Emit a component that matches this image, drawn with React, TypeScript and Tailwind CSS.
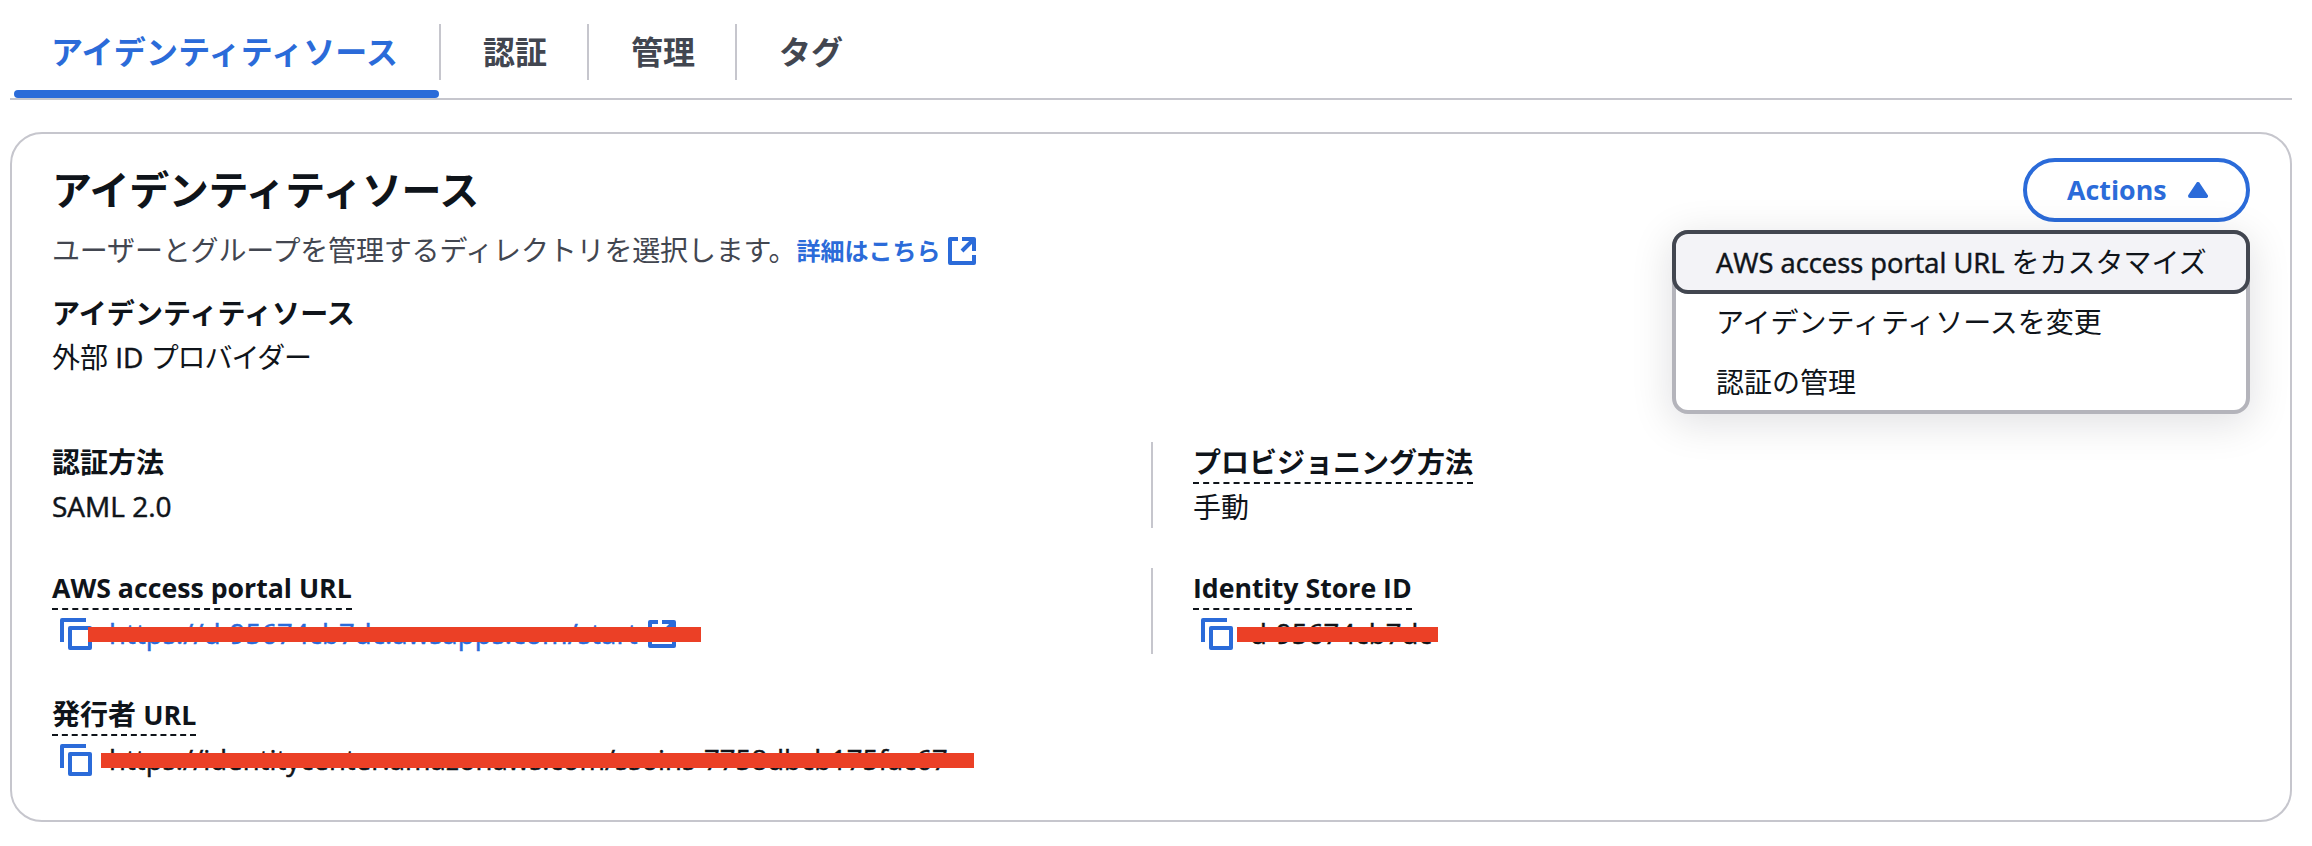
import React from "react";

const JP = "font-['Open_Sans','Noto_Sans_CJK_JP',sans-serif]";

function CopyIcon() {
  return (
    <svg width="32" height="32" viewBox="0 0 32 32" fill="none" stroke="#2b6bd9" strokeWidth="4" strokeLinejoin="round" className="block shrink-0">
      <path d="M26 2H2v22" />
      <path d="M10 10h20v20H10z" />
    </svg>
  );
}

function ExternalIcon() {
  return (
    <svg width="28" height="28" viewBox="0 0 28 28" fill="none" stroke="#2b6bd9" strokeWidth="4" strokeLinejoin="round" className="block shrink-0">
      <path d="M10 2H2v24h24v-8" />
      <path d="M14 2h12v12M26 2L14 14" />
    </svg>
  );
}

function Tab({ label, className }: { label: string; className: string }) {
  return (
    <div className="flex h-[98px] items-start pt-6">
      <div className={`flex h-14 items-center border-[#c6c6cd] text-[32px] font-bold whitespace-nowrap ${className}`}>{label}</div>
    </div>
  );
}

function Label({ children, dashed = false, className = "" }: { children: React.ReactNode; dashed?: boolean; className?: string }) {
  return (
    <div className="flex h-[42px]">
      <div className={`font-bold whitespace-nowrap leading-[40px] ${dashed ? "border-b-2 border-dashed border-[#0f141a]" : ""} ${className}`}>{children}</div>
    </div>
  );
}

function Redacted({ children, className, bar }: { children: React.ReactNode; className: string; bar: string }) {
  return (
    <div className="relative mt-2 flex h-8 items-center pl-2">
      <CopyIcon />
      <div className={`ml-[17px] flex items-center text-[27.5px] whitespace-nowrap leading-8 [-webkit-text-stroke:0.5px] ${className}`}>{children}</div>
      <div className={`absolute top-[9px] h-[15px] bg-[#eb4026] ${bar}`} />
    </div>
  );
}

export default function App() {
  return (
    <div lang="ja" className={`h-[846px] w-[2312px] bg-white pl-[10px] text-[28px] text-[#0f141a] ${JP}`}>
      <div className="flex h-[100px] w-[2282px] border-b-2 border-[#c6c6cd] pl-1">
        <div className="flex h-[98px] w-[427px] flex-col">
          <Tab label="アイデンティティソース" className="w-[427px] border-r-2 pl-[37px] tracking-[0.2px] text-[#2b6bd9]" />
          <div className="-mt-2 h-2 w-[425px] shrink-0 rounded bg-[#2b6bd9]" />
        </div>
        <Tab label="認証" className="w-[148px] border-r-2 pl-[42px] text-[#424650]" />
        <Tab label="管理" className="w-[148px] border-r-2 pl-[42px] text-[#424650]" />
        <Tab label="タグ" className="w-[148px] pl-[42px] text-[#424650]" />
      </div>

      <main className="mt-8 h-[690px] w-[2282px] rounded-[32px] border-2 border-[#c6c6cd] pr-10 pl-10">
        <header className="flex justify-between pt-6">
          <div>
            <h2 className="h-16 text-[40px] leading-[64px] font-bold tracking-[-0.4px] whitespace-nowrap">アイデンティティソース</h2>
            <div className="mt-[9px] flex h-[40px] items-center whitespace-nowrap text-[#424650]">
              <span className="pb-0.5 tracking-[-0.17px]">ユーザーとグループを管理するディレクトリを選択します。</span>
              <a className="flex items-center gap-[8px] text-[24px] font-bold text-[#2b6bd9]">
                詳細はこちら
                <ExternalIcon />
              </a>
            </div>
          </div>
          <div className="relative h-16">
            <button className="flex h-16 w-[227px] items-center rounded-full border-4 border-[#2b6bd9] pl-10 font-bold text-[#2b6bd9]">
              <span className="w-[98px] text-left text-[26.8px] whitespace-nowrap">Actions</span>
              <svg width="20" height="16" viewBox="0 0 20 16" className="ml-[23px] block">
                <path d="M10 2L18 14H2z" fill="#2b6bd9" stroke="#2b6bd9" strokeWidth="4" strokeLinejoin="round" />
              </svg>
            </button>
            <div className="absolute top-[72px] right-0 h-[184px] w-[578px] rounded-2xl border-4 border-[#b4b4bb] bg-white leading-[60px] whitespace-nowrap shadow-[0_8px_40px_2px_rgba(0,7,22,0.12)]">
              <div className="-mx-1 -mt-1 h-16 rounded-2xl border-4 border-[#424650] bg-[#f3f3f7] pl-10 leading-[56px]">
                <span className="text-[27.3px] [-webkit-text-stroke:0.5px]">AWS access portal URL </span>をカスタマイズ
              </div>
              <div className="h-[58px] pl-10 leading-[56px]">アイデンティティソースを変更</div>
              <div className="h-[60px] pl-10">認証の管理</div>
            </div>
          </div>
        </header>

        <section className="mt-[22px] h-[86px]">
          <Label className="tracking-[0.1px]">アイデンティティソース</Label>
          <div className="leading-[44px]">
            外部 <span className="[-webkit-text-stroke:0.5px]">ID</span> <span className="tracking-[-1.1px]">プロバイダー</span>
          </div>
        </section>

        <section className="mt-[63px] grid grid-cols-[1099px_1fr] gap-y-10">
          <div className="h-[86px]">
            <Label>認証方法</Label>
            <div className="leading-[45px] [-webkit-text-stroke:0.5px]">SAML 2.0</div>
          </div>
          <div className="h-[86px] border-l-2 border-[#c6c6cd] pl-10">
            <Label dashed>プロビジョニング方法</Label>
            <div className="leading-[47px]">手動</div>
          </div>
          <div className="h-[86px]">
            <Label dashed className="text-[26.7px]">AWS access portal URL</Label>
            <Redacted bar="left-9 w-[613px]" className="gap-[10px] tracking-[0.11px] text-[#2b6bd9]">
              <span>https://d-95674cb7dc.awsapps.com/start</span>
              <ExternalIcon />
            </Redacted>
          </div>
          <div className="h-[86px] border-l-2 border-[#c6c6cd] pl-10">
            <Label dashed className="text-[26.7px]">Identity Store ID</Label>
            <Redacted bar="left-11 w-[201px]" className="tracking-[0.15px]">d-95674cb7dc</Redacted>
          </div>
          <div className="h-[86px]">
            <Label dashed>発行者 <span className="text-[26.8px]">URL</span></Label>
            <Redacted bar="left-[49px] w-[873px]" className="tracking-[0.06px]">https://identitycenter.amazonaws.com/ssoins-7758dbcb175fac67</Redacted>
          </div>
        </section>
      </main>
    </div>
  );
}
